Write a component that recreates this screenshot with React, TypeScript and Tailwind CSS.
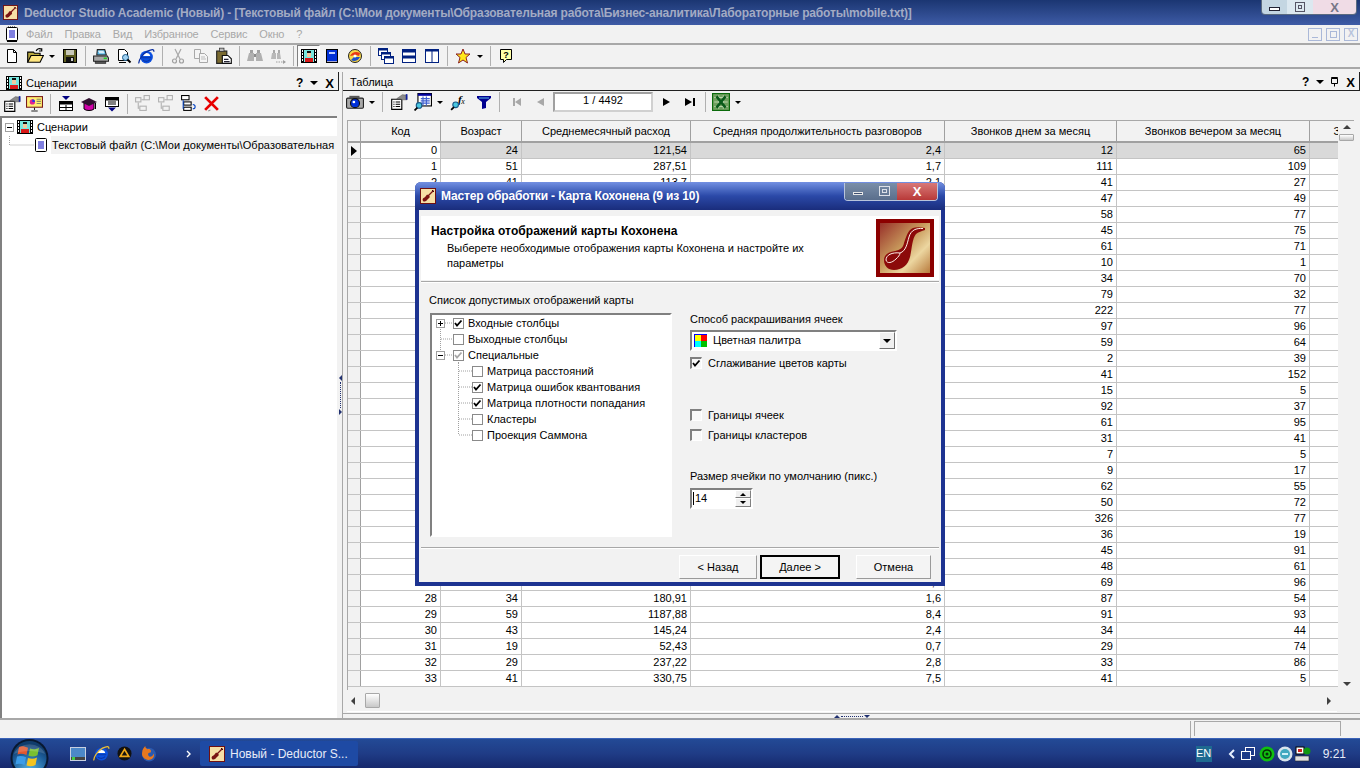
import type { ReactNode } from 'react';

// [код, возраст, расход, разговор, днем, вечером]; пусто там, где строку закрывает окно мастера
const rows: string[][] = [
  ['0', '24', '121,54', '2,4', '12', '65'],
  ['1', '51', '287,51', '1,7', '111', '109'],
  ['2', '41', '113,7', '2,1', '41', '27'],
  ['3', '', '', '', '47', '49'],
  ['4', '', '', '', '58', '77'],
  ['5', '', '', '', '45', '75'],
  ['6', '', '', '', '61', '71'],
  ['7', '', '', '', '10', '1'],
  ['8', '', '', '', '34', '70'],
  ['9', '', '', '', '79', '32'],
  ['10', '', '', '', '222', '77'],
  ['11', '', '', '', '97', '96'],
  ['12', '', '', '', '59', '64'],
  ['13', '', '', '', '2', '39'],
  ['14', '', '', '', '41', '152'],
  ['15', '', '', '', '15', '5'],
  ['16', '', '', '', '92', '37'],
  ['17', '', '', '', '61', '95'],
  ['18', '', '', '', '31', '41'],
  ['19', '', '', '', '7', '5'],
  ['20', '', '', '', '9', '17'],
  ['21', '', '', '', '62', '55'],
  ['22', '', '', '', '50', '72'],
  ['23', '', '', '', '326', '77'],
  ['24', '', '', '', '36', '19'],
  ['25', '', '', '', '45', '91'],
  ['26', '', '', '', '48', '61'],
  ['27', '38', '', '2,9', '69', '96'],
  ['28', '34', '180,91', '1,6', '87', '54'],
  ['29', '59', '1187,88', '8,4', '91', '93'],
  ['30', '43', '145,24', '2,4', '34', '44'],
  ['31', '19', '52,43', '0,7', '29', '74'],
  ['32', '29', '237,22', '2,8', '33', '86'],
  ['33', '41', '330,75', '7,5', '41', '5'],
];

const colW = ['w-[80px]', 'w-[81px]', 'w-[169px]', 'w-[254px]', 'w-[172px]', 'w-[193px]'];
const headers = [
  'Код',
  'Возраст',
  'Среднемесячный расход',
  'Средняя продолжительность разговоров',
  'Звонков днем за месяц',
  'Звонков вечером за месяц',
];

function Svg({ s = 16, children }: { s?: number; children: ReactNode }) {
  return (
    <svg width={s} height={s} viewBox="0 0 16 16" className="shrink-0">
      {children}
    </svg>
  );
}

function Violin({ s = 15 }: { s?: number }) {
  return (
    <svg width={s} height={s} viewBox="0 0 16 16" className="shrink-0">
      <rect x="0.500" y="0.500" width="15" height="15" fill="#f6dfa6" stroke="#701010" />
      <path d="M3 13c-1-2 0-3 1.500-3.500L6 8c.5-1.500 1.500-1.500 2.500-1l1 1c.5 1 0 2-1 2.500L7 12c-1 1.500-3 2-4 1z" fill="#7a1212" />
      <path d="M7.500 8.500L13.500 2.500" stroke="#7a1212" strokeWidth="1.300" />
      <path d="M12 2l2 2" stroke="#3a0a0a" />
    </svg>
  );
}

const NewDoc = () => (
  <Svg>
    <path d="M3.500 1.500h6l3 3v10h-9z" fill="#fff" stroke="#000" />
    <path d="M9.500 1.500v3h3" fill="none" stroke="#000" />
  </Svg>
);
const OpenFolder = () => (
  <Svg s={18}>
    <path d="M1.500 13.500v-9h5l1 1h5v2" fill="#b8a840" stroke="#000" />
    <path d="M1.500 13.500l3-6h11l-3 6z" fill="#ffe680" stroke="#000" />
    <path d="M9 3.500c1-2 3-2.500 5-1.500M14 1v2.500h-2.500" fill="none" stroke="#000" />
  </Svg>
);
const Save = () => (
  <Svg>
    <rect x="1.500" y="1.500" width="13" height="13" fill="#5e5e20" stroke="#000" />
    <rect x="4" y="2" width="8" height="5" fill="#c8c8b8" />
    <rect x="4" y="9" width="8" height="5" fill="#111" />
    <rect x="9" y="10" width="2" height="3" fill="#ccc" />
  </Svg>
);
const Printer = () => (
  <Svg s={17}>
    <path d="M5 1.500h7l1.500 5h-9z" fill="#58b8e8" stroke="#222" />
    <path d="M6 3h5M6.500 4.500h5" stroke="#fff" />
    <path d="M1.500 7.500h13l1 2v3h-14z" fill="#a8a8a8" stroke="#222" />
    <rect x="3" y="12.500" width="10" height="2" fill="#555" stroke="#222" strokeWidth=".6" />
    <rect x="11" y="9" width="3" height="1.500" fill="#2c2" />
  </Svg>
);
const Preview = () => (
  <Svg>
    <path d="M2.500 1.500h6l3 3v8h-9z" fill="#fff" stroke="#000" />
    <path d="M3 14.500h7" stroke="#000" />
    <circle cx="9.500" cy="9.500" r="3" fill="#9fd0f0" stroke="#1a5a8a" />
    <path d="M11.500 11.500l3 3" stroke="#000" strokeWidth="2" />
  </Svg>
);
// в панели инструментов значок сплошной синий, на панели задач с жёлтым кольцом
const IE = ({ s = 17, ring = '#0a2ea0' }: { s?: number; ring?: string }) => (
  <Svg s={s}>
    <circle cx="8" cy="8.500" r="6" fill="#0c50e0" />
    <path d="M4.500 7.500c.3-1.800 1.600-2.800 3.500-2.800s3.200 1 3.500 2.800z" fill="#fff" />
    <path d="M3.500 9.200h9M4.500 11.200c2 2 5 1.800 7-.2" stroke="#0a36a8" fill="none" />
    <path d="M1 14.500c-1-2 3-9 8-11.500s6-1.500 6 .5" fill="none" stroke={ring} strokeWidth="1.200" />
  </Svg>
);
const Cut = () => (
  <Svg>
    <path d="M5 1l5 10M11 1L6 11" stroke="#a8a8a8" strokeWidth="1.200" />
    <circle cx="4.500" cy="13" r="2" fill="none" stroke="#a0a0a0" strokeWidth="1.200" />
    <circle cx="11.500" cy="13" r="2" fill="none" stroke="#a0a0a0" strokeWidth="1.200" />
  </Svg>
);
const Copy = () => (
  <Svg>
    <path d="M1.500 1.500h6v9h-6z" fill="#f4f4f4" stroke="#a8a8a8" />
    <path d="M6.500 5.500h5l3 3v6h-8z" fill="#f4f4f4" stroke="#a8a8a8" />
    <path d="M8 9h4M8 11h5" stroke="#bbb" />
  </Svg>
);
const Paste = () => (
  <Svg s={18}>
    <path d="M1.500 3.500h9v11h-9z" fill="#7a6a30" stroke="#222" />
    <rect x="4" y="1" width="4" height="3" fill="#bbb" stroke="#222" strokeWidth=".6" />
    <path d="M6.500 7.500h5l3 3v4h-8z" fill="#fff" stroke="#111" />
    <path d="M8 11h4M8 13h5" stroke="#223" />
  </Svg>
);
const Binoc = () => (
  <Svg>
    <path d="M0 13l2-8h5v8zM16 13l-2-8H9v8z" fill="#b0b0b0" />
    <rect x="3" y="2" width="3" height="3" fill="#a0a0a0" />
    <rect x="10" y="2" width="3" height="3" fill="#a0a0a0" />
    <rect x="7" y="6" width="2" height="3" fill="#8c8c8c" />
  </Svg>
);
const BinocNext = () => (
  <Svg>
    <path d="M1 11l1-6h4v6zM11 11l-1-6H7v6z" fill="#b8b8b8" />
    <rect x="3" y="2" width="2" height="3" fill="#a8a8a8" />
    <rect x="8" y="2" width="2" height="3" fill="#a8a8a8" />
    <path d="M6 14h9" stroke="#a0a0a0" strokeDasharray="1.500 1" />
    <path d="M13 12l3 2-3 2z" fill="#a0a0a0" />
  </Svg>
);
const Film = ({ s = 16 }: { s?: number }) => (
  <svg width={s} height={s} viewBox="0 0 16 16" className="shrink-0" shapeRendering="crispEdges">
    <rect x="0" y="1" width="16" height="14" fill="#000" />
    <rect x="3" y="2" width="10" height="12" fill="#78e8e0" />
    {[2, 5, 8, 11].map(y => (
      <g key={y}>
        <rect x="1" y={y} width="1" height="2" fill="#fff" />
        <rect x="14" y={y} width="1" height="2" fill="#fff" />
      </g>
    ))}
    <rect x="6" y="4" width="4" height="5" fill="#f0c8a0" />
    <rect x="6" y="3" width="4" height="2" fill="#111" />
    <rect x="4" y="10" width="8" height="4" fill="#d81818" />
  </svg>
);
const Book = () => (
  <Svg>
    <rect x="2.500" y="1.500" width="11" height="13" fill="#0030d8" stroke="#000" />
    <rect x="5" y="4" width="6" height="2" fill="#c0d0ff" />
    <path d="M3 13.500h10" stroke="#aac" />
  </Svg>
);
const Globe = () => (
  <Svg>
    <circle cx="8" cy="8" r="6.500" fill="#f8d848" stroke="#222" />
    <path d="M3 8c2-4 6-5 10-3l-1 3-3-1z" fill="#e83818" />
    <path d="M13 9c-2 4-6 5-9 3l3-3z" fill="#2050c8" />
    <circle cx="8" cy="8" r="1.500" fill="#fff" />
  </Svg>
);
const Cascade = () => (
  <Svg>
    <rect x="0.500" y="0.500" width="9" height="7" fill="#fff" stroke="#002080" />
    <rect x="0.500" y="0.500" width="9" height="2" fill="#002080" />
    <rect x="3.500" y="4.500" width="9" height="7" fill="#fff" stroke="#002080" />
    <rect x="3.500" y="4.500" width="9" height="2" fill="#002080" />
    <rect x="6.500" y="8.500" width="9" height="7" fill="#fff" stroke="#002080" />
    <rect x="6.500" y="8.500" width="9" height="2" fill="#002080" />
  </Svg>
);
const TileH = () => (
  <Svg>
    <rect x="1.500" y="1.500" width="13" height="13" fill="#fff" stroke="#002080" />
    <rect x="1.500" y="1.500" width="13" height="3" fill="#002080" />
    <rect x="1.500" y="7.500" width="13" height="3" fill="#002080" />
  </Svg>
);
const TileV = () => (
  <Svg>
    <rect x="1.500" y="1.500" width="13" height="13" fill="#fff" stroke="#002080" />
    <rect x="1.500" y="1.500" width="13" height="2" fill="#002080" />
    <path d="M8 2v12" stroke="#002080" />
  </Svg>
);
const Star = () => (
  <Svg>
    <path d="M8 1l2 5h5l-4 3.500 1.500 5.500L8 12l-4.500 3L5 9.500 1 6h5z" fill="#ffe818" stroke="#8a2020" />
  </Svg>
);
const Help = () => (
  <Svg>
    <path d="M2.500 1.500h11v10h-5l-3 3v-3h-3z" fill="#ffffa8" stroke="#000" />
    <text x="8" y="10" textAnchor="middle" fontSize="9" fontWeight="700" fontFamily="Liberation Sans">?</text>
  </Svg>
);
const Props = () => (
  <Svg s={18}>
    <path d="M1.500 5.500h9v9h-9z" fill="#fff" stroke="#000" />
    <path d="M3 8h1M3 10h1M3 12h1M5 8h4M5 10h4M5 12h4" stroke="#000" />
    <path d="M6 5l5-3.500 4 .5v4l-4 0-2-1z" fill="#8a8a8a" stroke="#555" strokeWidth=".5" />
    <rect x="14" y="1" width="1.500" height="5" fill="#1020a0" />
  </Svg>
);
const Board = () => (
  <Svg s={17}>
    <rect x="0.500" y="1.500" width="15" height="10" fill="#ffee70" stroke="#7a1a1a" />
    <circle cx="6" cy="6.500" r="2.500" fill="#e02090" />
    <path d="M6 6.500V4a2.500 2.500 0 012.500 2.500z" fill="#2040e0" />
    <path d="M10 4h4M10 6h4M10 8h4" stroke="#886" />
    <path d="M8 12v2M5 15h6" stroke="#222" />
  </Svg>
);
const TableDown = () => (
  <Svg>
    <path d="M4 0h8L8 4z" fill="#000080" />
    <rect x="1.500" y="5.500" width="13" height="9" fill="#fff" stroke="#000" />
    <rect x="1.500" y="5.500" width="13" height="3" fill="#000" />
    <path d="M2 11.500h12M8 9v5" stroke="#000" />
  </Svg>
);
const Cap = () => (
  <Svg>
    <path d="M3 7v6c2 2 8 2 10 0V7z" fill="#d000a8" stroke="#000" />
    <path d="M0 6l8-4 8 4-8 4z" fill="#301030" />
    <path d="M14.500 7v6" stroke="#000" />
  </Svg>
);
const TableUp = () => (
  <Svg>
    <rect x="1.500" y="1.500" width="13" height="9" fill="#fff" stroke="#000" />
    <rect x="1.500" y="1.500" width="13" height="3" fill="#000" />
    <path d="M4 6h8M4 8h8" stroke="#000" />
    <path d="M4 11.500h8L8 15.500z" fill="#000080" />
  </Svg>
);
const TreeNet = ({ c = '#b0b0b0' }: { c?: string }) => (
  <Svg s={17}>
    <rect x="1.500" y="2.500" width="5" height="4" fill="#f2f2f2" stroke={c} />
    <rect x="9.500" y="0.500" width="5" height="4" fill="#f2f2f2" stroke={c} />
    <rect x="5.500" y="10.500" width="6" height="4" fill="#f2f2f2" stroke={c} />
    <path d="M4 7v5.500h1M7 4.500h2.500" fill="none" stroke={c} />
  </Svg>
);
const TreeColor = () => (
  <Svg s={17}>
    <rect x="1.500" y="0.500" width="7" height="4" fill="#fff" stroke="#000" />
    <rect x="3.500" y="6.500" width="7" height="3" fill="#fff" stroke="#000" />
    <rect x="3.500" y="11.500" width="7" height="3" fill="#fff" stroke="#000" />
    <path d="M3 5v8M12 9c3 0 3 4 0 4" fill="none" stroke="#0040c0" />
  </Svg>
);
const RedX = () => (
  <Svg s={17}>
    <path d="M2 2l12 12M14 2L2 14" stroke="#e80000" strokeWidth="2.600" />
    <path d="M5 15l2-1" stroke="#888" />
  </Svg>
);
const Camera = () => (
  <Svg s={18}>
    <rect x="0.500" y="4.500" width="15" height="9" rx="1" fill="#a8a8a8" stroke="#222" />
    <rect x="3" y="2.500" width="9" height="2" fill="#555" />
    <circle cx="8" cy="9" r="4" fill="#0030d8" stroke="#111" />
    <circle cx="7" cy="8" r="1.200" fill="#fff" />
  </Svg>
);
const TableLens = () => (
  <Svg s={18}>
    <rect x="3.500" y="0.500" width="12" height="11" fill="#fff" stroke="#000" />
    <rect x="3.500" y="0.500" width="12" height="2" fill="#0000a0" />
    <path d="M6 5h8M6 7h8M6 9h8M8 3v8M11 3v8" stroke="#4060d0" />
    <circle cx="4.500" cy="11" r="2.500" fill="#48c8e0" stroke="#1a5a8a" />
    <path d="M3 13l-2.500 2.500" stroke="#000" strokeWidth="1.600" />
  </Svg>
);
const FxLens = () => (
  <Svg s={18}>
    <text x="7" y="9" fontSize="10" fontStyle="italic" fontWeight="700" fontFamily="Liberation Serif">f</text>
    <text x="10" y="10" fontSize="7" fontStyle="italic" fontFamily="Liberation Serif">x</text>
    <circle cx="5" cy="10.500" r="2.500" fill="#48c8e0" stroke="#1a5a8a" />
    <path d="M3.500 12.500L1 15" stroke="#000" strokeWidth="1.600" />
  </Svg>
);
const Funnel = () => (
  <Svg>
    <path d="M1 2h14v2l-5 4v6l-4 1V8L1 4z" fill="#000090" />
    <path d="M3 4h10" stroke="#60c0e8" />
  </Svg>
);
const Excel = () => (
  <Svg s={18}>
    <rect x="0.500" y="0.500" width="15" height="15" fill="#70a060" stroke="#0a6a0a" strokeWidth="1" />
    <path d="M2 4h12M2 8h12M2 12h12M6 2v12M10 2v12" stroke="#cfe4c0" strokeWidth=".7" />
    <path d="M4 3l8 10M12 3l-8 10" stroke="#0a5a1a" strokeWidth="2.200" />
  </Svg>
);

function Btn({ children, pressed, className = '' }: { children?: ReactNode; pressed?: boolean; className?: string }) {
  return (
    <div
      className={`flex h-[22px] w-[23px] shrink-0 items-center justify-center ${
        pressed ? 'border-t border-l border-b border-r border-t-[#808080] border-l-[#808080] border-b-white border-r-white bg-[#fafafa]' : ''
      } ${className}`}
    >
      {children}
    </div>
  );
}

function Arrow({ w = 'w-[12px]' }: { w?: string }) {
  return (
    <div className={`flex h-[22px] ${w} shrink-0 items-center justify-center`}>
      <div className="h-0 w-0 border-x-[3px] border-t-[3px] border-x-transparent border-t-black" />
    </div>
  );
}

function Sep() {
  return (
    <div className="flex h-[22px] w-[8px] shrink-0 items-center justify-center">
      <div className="h-[20px] w-px bg-[#b0b0b0]" />
    </div>
  );
}

function Check({ on, gray }: { on?: boolean; gray?: boolean }) {
  return (
    <div className="flex h-[11px] w-[11px] shrink-0 items-center justify-center border border-[#8a8a8a] bg-white">
      {on && (
        <svg width="9" height="9" viewBox="0 0 9 9">
          <path d="M1 4l2 2.500L7.500 1.500" fill="none" stroke={gray ? '#a8a8a8' : '#000'} strokeWidth="1.800" />
        </svg>
      )}
    </div>
  );
}

function Expander({ open }: { open?: boolean }) {
  return (
    <div className="relative flex h-[9px] w-[9px] shrink-0 items-center justify-center border border-[#a0a0a0] bg-white">
      <div className="h-px w-[5px] bg-black" />
      {!open && <div className="absolute h-[5px] w-px bg-black" />}
    </div>
  );
}

// пунктирные линии дерева слева от пункта
function Branch({ d }: { d: string }) {
  return (
    <svg width="50" height="16" viewBox="0 0 50 16" className="absolute top-0 left-0">
      <path d={d} fill="none" stroke="#a0a0a0" strokeDasharray="1 1" />
    </svg>
  );
}

function ListItem({
  label,
  on,
  gray,
  child,
  line,
  expander,
}: {
  label: string;
  on?: boolean;
  gray?: boolean;
  child?: boolean;
  line: string;
  expander?: 'open' | 'closed';
}) {
  return (
    <div className="relative flex h-[16px] items-center">
      <Branch d={line} />
      <div className="relative flex w-[13px] shrink-0 justify-end">
        {expander && <Expander open={expander === 'open'} />}
      </div>
      <div className={`relative ${child ? 'ml-[27px]' : 'ml-[8px]'}`}>
        <Check on={on} gray={gray} />
      </div>
      <span className="relative ml-[4px] whitespace-nowrap">{label}</span>
    </div>
  );
}

function WinCheck({ label, on, className = '' }: { label: string; on?: boolean; className?: string }) {
  return (
    <div className={`flex items-center ${className}`}>
      <div className="flex h-[12px] w-[12px] items-center justify-center border-t-2 border-l-2 border-b border-r border-t-[#808080] border-l-[#808080] border-b-white border-r-white bg-[#f8f8f8]">
        {on && (
          <svg width="9" height="9" viewBox="0 0 9 9">
            <path d="M1 4l2 2.500L7.500 1.500" fill="none" stroke="#000" strokeWidth="1.800" />
          </svg>
        )}
      </div>
      <span className="ml-[6px]">{label}</span>
    </div>
  );
}

function WinButton({ label, def, className = '' }: { label: string; def?: boolean; className?: string }) {
  return (
    <div
      className={`flex h-[24px] items-center justify-center ${
        def ? 'border-2 border-black' : 'border border-t-white border-l-white border-r-[#9a9a9a] border-b-[#9a9a9a]'
      } bg-[#f4f4f4] ${className}`}
    >
      {label}
    </div>
  );
}

function PaneGlyphs({ float }: { float?: boolean }) {
  return (
    <div className="flex items-center gap-[7px] font-bold">
      <span className="text-[12px] leading-none">?</span>
      <div className="h-0 w-0 border-x-[4px] border-t-[4px] border-x-transparent border-t-black" />
      {float && (
        <svg width="10" height="10" viewBox="0 0 10 10" className="-ml-[2px]">
          <path d="M2.500 1.500h6v5h-6zM2.500 1.500v-1h6v1M5.500 6.500v3" fill="none" stroke="#000" />
        </svg>
      )}
      <span className="text-[13px] leading-none">X</span>
    </div>
  );
}

function Wizard() {
  return (
    <div className="absolute top-[182px] left-[415px] flex h-[404px] w-[530px] flex-col rounded-t-[6px] border-x-4 border-b-4 border-[#1d3391]">
      <div className="-mx-1 flex h-[28px] shrink-0 items-center rounded-t-[6px] bg-linear-to-b from-[#7390e2] via-[#2b49a8] to-[#1a2d7c] pl-[5px]">
        <Violin s={16} />
        <span className="ml-[5px] text-[12px] font-bold tracking-[-0.14px] text-white">
          Мастер обработки - Карта Кохонена (9 из 10)
        </span>
        <div className="mr-[7px] mb-[9px] ml-auto flex h-[18px] overflow-hidden rounded-b-[4px] border border-t-0 border-[#b8c4dc]">
          <div className="flex w-[26px] items-center justify-center bg-linear-to-b from-[#7a8ea8] to-[#5a6e8c] pt-[5px]">
            <div className="h-[3px] w-[10px] border border-[#e8e8e8] bg-[#405070]" />
          </div>
          <div className="flex w-[26px] items-center justify-center bg-linear-to-b from-[#7a8ea8] to-[#5a6e8c]">
            <div className="flex h-[10px] w-[11px] items-center justify-center border border-[#dce0e8]">
              <div className="h-[4px] w-[5px] border border-[#dce0e8]" />
            </div>
          </div>
          <div className="flex w-[40px] items-center justify-center bg-linear-to-b from-[#d87878] to-[#b83838] text-[13px] leading-none font-bold text-white">
            X
          </div>
        </div>
      </div>
      <div className="flex min-h-0 flex-1 flex-col bg-[#f2f2f2] px-[2px]">
        <div className="mt-[6px] flex h-[64px] shrink-0 bg-white pl-[10px]">
          <div className="flex-1 pt-[9px]">
            <div className="text-[12px] font-bold tracking-[0.1px]">Настройка отображений карты Кохонена</div>
            <div className="mt-[4px] ml-[16px] w-[380px] leading-[15px]">
              Выберете необходимые отображения карты Кохонена и настройте их параметры
            </div>
          </div>
          <svg width="58" height="58" viewBox="0 0 58 58" className="mt-[3px] mr-[5px] shrink-0">
            <defs>
              <linearGradient id="logoBg" x1="0" y1="0" x2="1" y2="1">
                <stop offset="0" stopColor="#98302a" />
                <stop offset=".45" stopColor="#c89a5c" />
                <stop offset=".7" stopColor="#ecd6a0" />
                <stop offset="1" stopColor="#b87a3c" />
              </linearGradient>
            </defs>
            <rect x="0" y="0" width="58" height="58" fill="#8c0000" />
            <rect x="4" y="4" width="50" height="50" fill="url(#logoBg)" />
            <path d="M49 9C44 8 40 8 37 9 32 11 30 18 28 24 27 29 24 31 19 32 12 33 8 36 8 41 8 47 12 51 18 51 26 51 32 46 34 38 36 30 36 20 40 15 42 13 46 12 49 11z" fill="#8c0a0a" />
            <path d="M47 9.500C40 9 35 11 33 18 31 25 30 32 24 34 16 33 10 36 10 41 11 45 16 44 20 40 22 38 24 36 24 34" fill="none" stroke="#fff0e8" strokeWidth="1" />
          </svg>
        </div>
        <div className="mt-px h-[2px] shrink-0 border-t border-[#a8a8a8] bg-white" />
        <div className="flex flex-1 pt-[11px] pl-[8px]">
          <div className="w-[261px] shrink-0">
            <div className="leading-[13px]">Список допустимых отображений карты</div>
            <div className="mt-[6px] ml-px h-[224px] w-[242px] border-2 border-t-[#808080] border-l-[#808080] border-r-white border-b-white bg-white">
              <ListItem label="Входные столбцы" on expander="closed" line="M13 8h8M8.500 12v4" />
              <ListItem label="Выходные столбцы" line="M8.500 0v16M9 8h12" />
              <ListItem label="Специальные" on gray expander="open" line="M13 8h8M8.500 0v4M26.500 13v3" />
              <ListItem label="Матрица расстояний" child line="M26.500 0v16M27 8h13" />
              <ListItem label="Матрица ошибок квантования" on child line="M26.500 0v16M27 8h13" />
              <ListItem label="Матрица плотности попадания" on child line="M26.500 0v16M27 8h13" />
              <ListItem label="Кластеры" child line="M26.500 0v16M27 8h13" />
              <ListItem label="Проекция Саммона" child line="M26.500 0v8M27 8h13" />
            </div>
          </div>
          <div className="flex w-[210px] flex-col">
            <div className="mt-[19px] leading-[13px]">Способ раскрашивания ячеек</div>
            <div className="mt-[4px] flex h-[21px] w-[207px] items-center justify-between border-2 border-t-[#808080] border-l-[#808080] border-r-white border-b-white bg-white">
              <div className="flex items-center">
                <div className="ml-[2px] grid h-[13px] w-[13px] grid-cols-2 grid-rows-2 border-t border-l border-[#0000ff]">
                  <div className="bg-[#ffff00]" />
                  <div className="bg-[#ff0000]" />
                  <div className="bg-[#00ffff]" />
                  <div className="bg-[#00c000]" />
                </div>
                <span className="ml-[6px]">Цветная палитра</span>
              </div>
              <div className="flex h-[17px] w-[16px] items-center justify-center border border-t-white border-l-white border-r-[#707070] border-b-[#707070] bg-[#f0f0f0]">
                <div className="h-0 w-0 border-x-[4px] border-t-[4px] border-x-transparent border-t-black" />
              </div>
            </div>
            <WinCheck label="Сглаживание цветов карты" on className="mt-[6px]" />
            <WinCheck label="Границы ячеек" className="mt-[40px]" />
            <WinCheck label="Границы кластеров" className="mt-[8px]" />
            <div className="mt-[29px] leading-[13px]">Размер ячейки по умолчанию (пикс.)</div>
            <div className="mt-[5px] flex h-[21px] w-[63px] items-center justify-between border-2 border-t-[#808080] border-l-[#808080] border-r-white border-b-white bg-white pl-[1px]">
              <span className="border-l border-black pl-px leading-[13px]">14</span>
              <div className="flex h-[17px] w-[16px] flex-col">
                <div className="flex h-[8px] items-center justify-center border border-t-white border-l-white border-r-[#808080] border-b-[#808080] bg-[#f0f0f0]">
                  <div className="h-0 w-0 border-x-[3px] border-b-[3px] border-x-transparent border-b-black" />
                </div>
                <div className="flex h-[9px] items-center justify-center border border-t-white border-l-white border-r-[#808080] border-b-[#808080] bg-[#f0f0f0]">
                  <div className="h-0 w-0 border-x-[3px] border-t-[3px] border-x-transparent border-t-black" />
                </div>
              </div>
            </div>
          </div>
        </div>
        <div className="h-[2px] shrink-0 border-t border-[#a8a8a8] bg-white" />
        <div className="flex h-[33px] shrink-0 items-start pt-[6px] pl-[258px]">
          <WinButton label="< Назад" className="w-[78px]" />
          <WinButton label="Далее >" def className="ml-[3px] w-[80px]" />
          <WinButton label="Отмена" className="ml-[16px] w-[75px]" />
        </div>
      </div>
    </div>
  );
}

function Grid() {
  return (
    <div className="flex h-[570px] w-[1007px] shrink-0 border-t border-l border-[#a8a8a8]">
      <div className="w-[990px] shrink-0 overflow-hidden">
        <div className="flex h-[22px] w-[1200px] border-b-2 border-[#a0a0a0] bg-[#f2f2f2]">
          <div className="w-[13px] shrink-0 border-r border-[#a0a0a0]" />
          {headers.map((h, i) => (
            <div key={h} className={`${colW[i]} flex shrink-0 items-center justify-center border-r border-[#a0a0a0] whitespace-nowrap`}>
              {h}
            </div>
          ))}
          <div className="flex w-[172px] shrink-0 items-center justify-center whitespace-nowrap">Звонков ночью за месяц</div>
        </div>
        {rows.map((r, i) => (
          <div key={r[0]} className="flex h-[16px] w-[1200px] border-b border-[#c4c4c4]">
            <div className="flex w-[13px] shrink-0 items-center justify-center border-r border-[#a0a0a0] bg-[#f2f2f2]">
              {i === 0 && <div className="h-0 w-0 border-y-[5px] border-l-[6px] border-y-transparent border-l-black" />}
            </div>
            {r.map((c, j) => (
              <div
                key={j}
                className={`${colW[j]} flex shrink-0 items-center justify-end border-r border-[#c4c4c4] pr-[3px] ${
                  i === 0 && j > 0 ? 'bg-[#d9d9d9]' : 'bg-white'
                }`}
              >
                {c}
              </div>
            ))}
            <div className={`w-[172px] shrink-0 ${i === 0 ? 'bg-[#d9d9d9]' : 'bg-white'}`} />
          </div>
        ))}
      </div>
      <div className="flex w-[17px] shrink-0 flex-col items-center bg-[#f2f2f2] pt-[4px] pb-[2px]">
        <div className="h-0 w-0 border-x-[4px] border-b-[4px] border-x-transparent border-b-[#404040]" />
        <div className="mt-[5px] h-[7px] w-[15px] rounded-[1px] border border-[#a8a8a8] bg-linear-to-b from-white to-[#c8c8c8]" />
        <div className="mt-auto mb-[2px] h-0 w-0 border-x-[4px] border-t-[4px] border-x-transparent border-t-[#404040]" />
      </div>
    </div>
  );
}

export default function App() {
  return (
    <div className="relative flex h-[768px] w-[1360px] flex-col overflow-hidden bg-[#f2f2f2] font-['Liberation_Sans',sans-serif] text-[11px] leading-none text-black">
      <div className="flex h-[25px] shrink-0 items-center bg-linear-to-b from-[#1b3672] to-[#3e5ba6] pl-[3px]">
        <Violin />
        <span className="ml-[6px] text-[12px] font-bold tracking-[-0.16px] whitespace-nowrap text-[#a3abc4]">
          Deductor Studio Academic (Новый) - [Текстовый файл (C:\Мои документы\Образовательная работа\Бизнес-аналитика\Лабораторные работы\mobile.txt)]
        </span>
        <div className="mr-[3px] mb-[10px] ml-auto flex h-[15px] overflow-hidden rounded-b-[4px] border border-t-0 border-[#5a6a80]">
          <div className="flex w-[25px] items-center justify-center bg-[#c4d6e2] pt-[3px]">
            <div className="h-[4px] w-[11px] border border-[#223] bg-white" />
          </div>
          <div className="flex w-[26px] items-center justify-center bg-[#dce8f0]">
            <div className="flex h-[10px] w-[10px] items-center justify-center border border-[#556]">
              <div className="h-[4px] w-[4px] border border-[#556]" />
            </div>
          </div>
          <div className="flex w-[43px] items-center justify-center bg-[#f0dce6] text-[13px] font-bold text-[#778]">X</div>
        </div>
      </div>

      <div className="flex h-[20px] shrink-0 items-center border-b-2 border-[#a8a8a8] pl-[6px] tracking-[-0.15px] text-[#a8a8a8]">
        <svg width="12" height="16" viewBox="0 0 12 16" className="shrink-0">
          <rect x="0.500" y="1.500" width="11" height="13" rx="1" fill="#fff" stroke="#000" />
          <rect x="1" y="14" width="10" height="2" fill="#000" />
          <path d="M3 5h6M3 7h6M3 9h6M3 11h6" stroke="#0000c0" />
          <path d="M2 1h8" stroke="#000" strokeDasharray="1 1" />
        </svg>
        <span className="ml-[8px]">Файл</span>
        <span className="ml-[12px]">Правка</span>
        <span className="ml-[12px]">Вид</span>
        <span className="ml-[12px]">Избранное</span>
        <span className="ml-[12px]">Сервис</span>
        <span className="ml-[12px]">Окно</span>
        <span className="ml-[12px]">?</span>
        <div className="mr-[2px] ml-auto flex gap-[4px]">
          <div className="flex h-[13px] w-[14px] items-end justify-center border border-[#aab8d8] pb-[2px]"><div className="h-px w-[6px] bg-[#aab8d8]" /></div>
          <div className="flex h-[13px] w-[14px] items-center justify-center border border-[#aab8d8]"><div className="h-[7px] w-[7px] border border-[#aab8d8]" /></div>
          <div className="flex h-[13px] w-[14px] items-center justify-center border border-[#aab8d8] text-[10px] leading-none font-bold text-[#b8c4dc]">X</div>
        </div>
      </div>

      <div className="flex h-[24px] shrink-0 items-center border-b-2 border-[#a8a8a8]">
        <Btn><NewDoc /></Btn>
        <Btn><OpenFolder /></Btn>
        <Arrow />
        <Btn><Save /></Btn>
        <Sep />
        <Btn><Printer /></Btn>
        <Btn><Preview /></Btn>
        <Btn><IE /></Btn>
        <Sep />
        <Btn><Cut /></Btn>
        <Btn><Copy /></Btn>
        <Btn><Paste /></Btn>
        <Sep />
        <Btn><Binoc /></Btn>
        <Btn><BinocNext /></Btn>
        <Sep />
        <Btn pressed><Film /></Btn>
        <Btn><Book /></Btn>
        <Btn><Globe /></Btn>
        <Sep />
        <Btn><Cascade /></Btn>
        <Btn><TileH /></Btn>
        <Btn><TileV /></Btn>
        <Sep />
        <Btn><Star /></Btn>
        <Arrow />
        <Sep />
        <Btn><Help /></Btn>
      </div>

      <div className="flex min-h-0 flex-1 pt-[3px]">
        <div className="flex w-[339px] shrink-0 flex-col">
          <div className="flex h-[19px] shrink-0 items-center justify-between border-r border-b border-[#202020] pt-[4px] pr-[4px] pl-[6px]">
            <div className="flex items-center">
              <Film />
              <span className="ml-[4px] leading-none">Сценарии</span>
            </div>
            <PaneGlyphs />
          </div>
          <div className="flex h-[25px] shrink-0 items-center">
            <Btn><Props /></Btn>
            <Btn><Board /></Btn>
            <Sep />
            <Btn><TableDown /></Btn>
            <Btn><Cap /></Btn>
            <Btn><TableUp /></Btn>
            <Sep />
            <Btn><TreeNet /></Btn>
            <Btn><TreeNet /></Btn>
            <Btn><TreeColor /></Btn>
            <Btn><RedX /></Btn>
          </div>
          <div className="mr-[2px] min-h-0 flex-1 border-t-2 border-l-2 border-t-[#808080] border-l-[#808080] bg-white pl-[3px]">
            <div className="flex h-[18px] items-center">
              <Expander open />
              <div className="ml-[3px]"><Film /></div>
              <span className="ml-[4px]">Сценарии</span>
            </div>
            <div className="relative flex h-[18px] items-center">
              <svg width="30" height="18" viewBox="0 0 30 18" className="shrink-0">
                <path d="M4.500 0v9h25" fill="none" stroke="#a0a0a0" strokeDasharray="1 1" />
              </svg>
              <svg width="14" height="16" viewBox="0 0 12 16" className="ml-[-1px] shrink-0">
                <rect x="0.500" y="1.500" width="11" height="13" rx="1" fill="#fff" stroke="#000" />
                <path d="M3 5h6M3 7h6M3 9h6M3 11h6" stroke="#0000c0" />
              </svg>
              <div className="ml-[3px] flex h-[18px] min-w-0 flex-1 items-center bg-[#f2f2f2] pl-px tracking-[0.07px] whitespace-nowrap">
                Текстовый файл (C:\Мои документы\Образовательная
              </div>
            </div>
          </div>
        </div>

        <div className="relative flex w-[4px] shrink-0 flex-col items-center justify-center gap-px border-r border-[#a8a8a8]">
          <div className="h-0 w-0 border-y-[3px] border-r-[3px] border-y-transparent border-r-[#203070]" />
          <div className="h-[26px] border-l border-dotted border-[#203070]" />
          <div className="h-0 w-0 border-y-[3px] border-l-[3px] border-y-transparent border-l-[#203070]" />
        </div>

        <div className="flex min-w-0 flex-1 flex-col">
          <div className="flex h-[19px] shrink-0 items-center justify-between border-r border-b border-[#202020] pt-[2px] pr-[4px] pl-[7px]">
            <span>Таблица</span>
            <PaneGlyphs float />
          </div>
          <div className="flex h-[22px] shrink-0 items-center">
            <Btn><Camera /></Btn>
            <Arrow />
            <Sep />
            <Btn className="ml-[1px]"><Props /></Btn>
            <Btn className="ml-[1px]"><TableLens /></Btn>
            <Arrow />
            <Btn className="ml-[1px]"><FxLens /></Btn>
            <Btn className="ml-[2px]"><Funnel /></Btn>
            <Sep />
            <Btn className="ml-[2px]">
              <svg width="10" height="8" viewBox="0 0 10 8"><path d="M1 0v8h2V0zM9 0v8L3 4z" fill="#a8a8a8" /></svg>
            </Btn>
            <Btn>
              <svg width="8" height="8" viewBox="0 0 8 8"><path d="M8 0v8L1 4z" fill="#a8a8a8" /></svg>
            </Btn>
            <div className="ml-[2px] flex h-[20px] w-[100px] shrink-0 items-center justify-center border-2 border-t-[#a0a0a0] border-l-[#a0a0a0] border-r-[#d0d0d0] border-b-[#d0d0d0] bg-white pb-[3px]">
              1 / 4492
            </div>
            <Btn className="ml-[2px]">
              <svg width="8" height="8" viewBox="0 0 8 8"><path d="M0 0v8l7-4z" fill="#000" /></svg>
            </Btn>
            <Btn>
              <svg width="10" height="8" viewBox="0 0 10 8"><path d="M0 0v8l7-4zM8 0v8h2V0z" fill="#000" /></svg>
            </Btn>
            <Sep />
            <Btn><Excel /></Btn>
            <Arrow />
          </div>
          <div className="mt-[7px] flex min-h-0 flex-1 flex-col pl-[4px]">
            <Grid />
            <div className="flex h-[22px] w-[990px] shrink-0 items-center border-b border-white pl-[4px]">
              <div className="h-0 w-0 border-y-[4px] border-r-[4px] border-y-transparent border-r-[#404040]" />
              <div className="ml-[10px] h-[15px] w-[15px] rounded-[1px] border border-[#a8a8a8] bg-linear-to-b from-white to-[#c8c8c8]" />
              <div className="mr-[6px] ml-auto h-0 w-0 border-y-[4px] border-l-[4px] border-y-transparent border-l-[#404040]" />
            </div>
            <div className="mt-[1px] -ml-[4px] flex items-start justify-center border-t border-[#a8a8a8] pt-[1px]">
              <div className="flex items-center gap-[1px]">
                <div className="h-0 w-0 border-x-[3px] border-b-[3px] border-x-transparent border-b-[#203070]" />
                <div className="w-[22px] border-t border-dotted border-[#203070]" />
                <div className="h-0 w-0 border-x-[3px] border-t-[3px] border-x-transparent border-t-[#203070]" />
              </div>
            </div>
          </div>
        </div>
      </div>

      <div className="flex h-[20px] shrink-0 border-t-2 border-[#a8a8a8] pt-[1px]">
        <div className="w-[1191px] shrink-0 border-r border-[#a8a8a8]" />
        <div className="ml-[3px] h-[15px] w-[147px] border-t border-r border-l border-[#a8a8a8]" />
      </div>

      <div className="flex h-[30px] shrink-0 items-center border-t border-[#3a62b8] bg-linear-to-b from-[#234a96] via-[#1f3c86] to-[#16286c] text-white">
        <svg width="40" height="30" viewBox="0 0 40 30" className="ml-[10px] shrink-0">
          <defs>
            <radialGradient id="orb" cx="0.500" cy="0.900" r="0.800">
              <stop offset="0" stopColor="#58b8e8" />
              <stop offset=".7" stopColor="#1c5c98" />
              <stop offset="1" stopColor="#103c6c" />
            </radialGradient>
          </defs>
          <circle cx="19.500" cy="19" r="19" fill="#081830" />
          <circle cx="19.500" cy="19" r="17" fill="url(#orb)" />
          <path d="M9 8c3-1.500 6-.5 9 .8L16.500 16c-3-1.200-6-1.800-9-.6z" fill="#e2582e" />
          <path d="M20 9.500c3 1 6 1 9-.8l-1.500 7.500c-3 1.500-6 1.500-9 .5z" fill="#7ac030" />
          <path d="M7 17.500c3-1 6-.5 9 .8L14.500 26c-3-1.200-6-1.800-9-.6z" fill="#3c9ce8" />
          <path d="M18 19c3 1 6 1 9-.5L25.500 26c-3 1.500-6 1.500-9 .5z" fill="#f4c420" />
          <path d="M4 15a16 13 0 0131 0c-8-4-23-4-31 0z" fill="#fff" opacity=".15" />
        </svg>
        <svg width="16" height="14" viewBox="0 0 16 14" className="ml-[20px] shrink-0">
          <rect x="0.500" y="0.500" width="15" height="13" fill="#4c88c8" stroke="#c8d0e0" />
          <rect x="1" y="10" width="14" height="3" fill="#444" />
          <rect x="2" y="10" width="3" height="3" fill="#4c4" />
        </svg>
        <div className="ml-[7px]"><IE s={17} ring="#f0c030" /></div>
        <svg width="15" height="15" viewBox="0 0 16 16" className="ml-[7px] shrink-0">
          <circle cx="8" cy="8" r="7.500" fill="#111" />
          <path d="M8 3.500L12.500 11h-9z" fill="none" stroke="#f0a818" strokeWidth="1.800" />
        </svg>
        <svg width="17" height="17" viewBox="0 0 16 16" className="ml-[8px] shrink-0">
          <circle cx="8.500" cy="9" r="6.500" fill="#2a5ab0" />
          <path d="M2 7c0-3 2-5 3-6 0 2 1 2 2 3 3-1 4 2 3 3-2 0-3 1-2 3s4 1 5-2c1 4-2 6-5 6-3 0-7-3-6-7z" fill="#e87820" />
        </svg>
        <div className="ml-[29px] w-[6px] shrink-0">
          <svg width="6" height="8" viewBox="0 0 6 8"><path d="M1 1l3 3-3 3" fill="none" stroke="#fff" strokeWidth="1.400" /></svg>
        </div>
        <div className="ml-[8px] flex h-[25px] w-[158px] shrink-0 items-center rounded-[2px] bg-[#1e4aa4] pl-[9px] text-[12px] text-[#e8ecf8]">
          <Violin s={16} />
          <span className="ml-[5px] whitespace-nowrap">Новый - Deductor S...</span>
        </div>
        <div className="ml-auto flex items-center">
          <div className="flex h-[16px] w-[16px] items-center justify-center bg-[#1e6a90] text-[11px] text-white">EN</div>
          <svg width="8" height="10" viewBox="0 0 8 10" className="ml-[16px]"><path d="M6 1L2 5l4 4" fill="none" stroke="#e8f0ff" strokeWidth="2" /></svg>
          <svg width="14" height="14" viewBox="0 0 14 14" className="ml-[5px]">
            <rect x="4.500" y="0.500" width="9" height="8" fill="#1c3a88" stroke="#fff" />
            <rect x="0.500" y="4.500" width="9" height="8" fill="#1c3a88" stroke="#fff" />
          </svg>
          <svg width="16" height="16" viewBox="0 0 16 16" className="ml-[4px]">
            <circle cx="8" cy="8" r="7.500" fill="#10c010" />
            <circle cx="8" cy="8" r="4" fill="none" stroke="#083008" strokeWidth="1.600" />
            <circle cx="8" cy="8" r="1.500" fill="#083008" />
          </svg>
          <svg width="16" height="16" viewBox="0 0 16 16" className="ml-[2px]">
            <circle cx="8" cy="8" r="7.500" fill="#d8e4ec" />
            <circle cx="8" cy="8" r="5" fill="#40a8c0" />
            <path d="M5 8h6" stroke="#d0f0f8" strokeWidth="2" />
          </svg>
          <svg width="16" height="16" viewBox="0 0 16 16" className="ml-[2px]">
            <rect x="1" y="1" width="8" height="7" fill="#fff" stroke="#000" />
            <rect x="3" y="3" width="4" height="3" fill="#d02020" />
            <rect x="0" y="10" width="14" height="5" fill="#e0e0e0" stroke="#222" strokeWidth=".6" />
            <circle cx="12" cy="5" r="3.500" fill="#109810" />
          </svg>
          <span className="mr-[14px] ml-[12px] text-[12px] text-[#e8ecf8]">9:21</span>
        </div>
      </div>

      <Wizard />
    </div>
  );
}
